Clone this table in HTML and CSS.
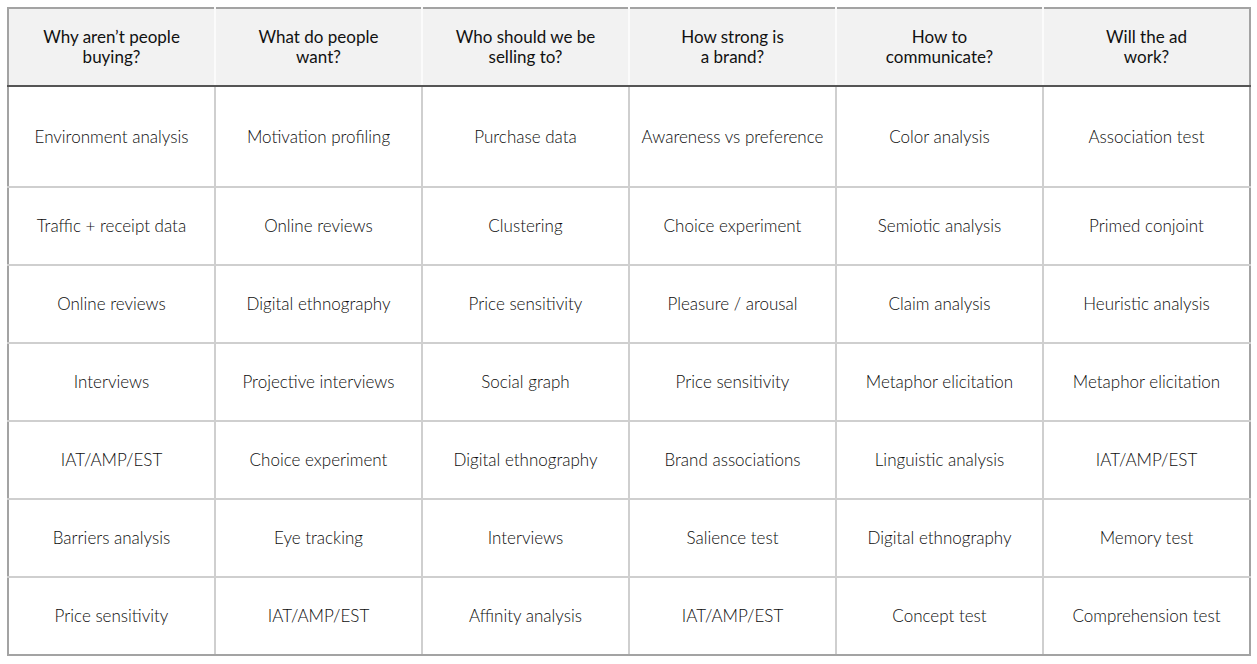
FILE: index.html
```html
<!DOCTYPE html>
<html>
<head>
<meta charset="utf-8">
<link rel="stylesheet" href="styles.css">
</head>
<body>
<table class="grid">
  <colgroup>
    <col class="c"><col class="c"><col class="c"><col class="c"><col class="c"><col class="c">
  </colgroup>
  <thead>
    <tr>
      <th>Why aren’t people<br>buying?</th>
      <th>What do people<br>want?</th>
      <th>Who should we be<br>selling to?</th>
      <th>How strong is<br>a brand?</th>
      <th>How to<br>communicate?</th>
      <th>Will the ad<br>work?</th>
    </tr>
  </thead>
  <tbody>
    <tr class="first">
      <td>Environment analysis</td><td>Motivation profiling</td><td>Purchase data</td><td>Awareness vs preference</td><td>Color analysis</td><td>Association test</td>
    </tr>
    <tr>
      <td>Traffic + receipt data</td><td>Online reviews</td><td>Clustering</td><td>Choice experiment</td><td>Semiotic analysis</td><td>Primed conjoint</td>
    </tr>
    <tr>
      <td>Online reviews</td><td>Digital ethnography</td><td>Price sensitivity</td><td>Pleasure / arousal</td><td>Claim analysis</td><td>Heuristic analysis</td>
    </tr>
    <tr>
      <td>Interviews</td><td>Projective interviews</td><td>Social graph</td><td>Price sensitivity</td><td>Metaphor elicitation</td><td>Metaphor elicitation</td>
    </tr>
    <tr>
      <td>IAT/AMP/EST</td><td>Choice experiment</td><td>Digital ethnography</td><td>Brand associations</td><td>Linguistic analysis</td><td>IAT/AMP/EST</td>
    </tr>
    <tr>
      <td>Barriers analysis</td><td>Eye tracking</td><td>Interviews</td><td>Salience test</td><td>Digital ethnography</td><td>Memory test</td>
    </tr>
    <tr>
      <td>Price sensitivity</td><td>IAT/AMP/EST</td><td>Affinity analysis</td><td>IAT/AMP/EST</td><td>Concept test</td><td>Comprehension test</td>
    </tr>
  </tbody>
</table>
</body>
</html>
```
FILE: styles.css
```css
html, body {
  margin: 0;
  padding: 0;
  background: #ffffff;
}
body {
  padding: 7px;
  font-family: Lato, "Liberation Sans", sans-serif;
  color: #1e1e1e;
}
.grid {
  border-collapse: collapse;
  table-layout: fixed;
  width: 1244px;
  border: 2px solid #a3a3a3;
}
.grid .c {
  width: 207px;
}
.grid th {
  background: #f2f2f2;
  font-weight: 400;
  font-size: 17px;
  line-height: 20px;
  height: 76px;
  padding: 0 4px;
  text-align: center;
  vertical-align: middle;
  border-left: 2px solid #fbfbfb;
  border-bottom: 2px solid #555555;
  color: #111;
}
.grid th:first-child {
  border-left: 2px solid #a3a3a3;
}
.grid td {
  font-weight: 300;
  font-size: 17px;
  line-height: 20px;
  height: 76px;
  padding: 0 4px;
  text-align: center;
  vertical-align: middle;
  border: 2px solid #cfcfcf;
  color: #0c0c0c;
}
.grid td:first-child {
  border-left: 2px solid #a3a3a3;
}
.grid td:last-child {
  border-right: 2px solid #a3a3a3;
}
.grid tbody tr:last-child td {
  border-bottom: 2px solid #a3a3a3;
}
.grid tr.first td {
  height: 99px;
}
```
